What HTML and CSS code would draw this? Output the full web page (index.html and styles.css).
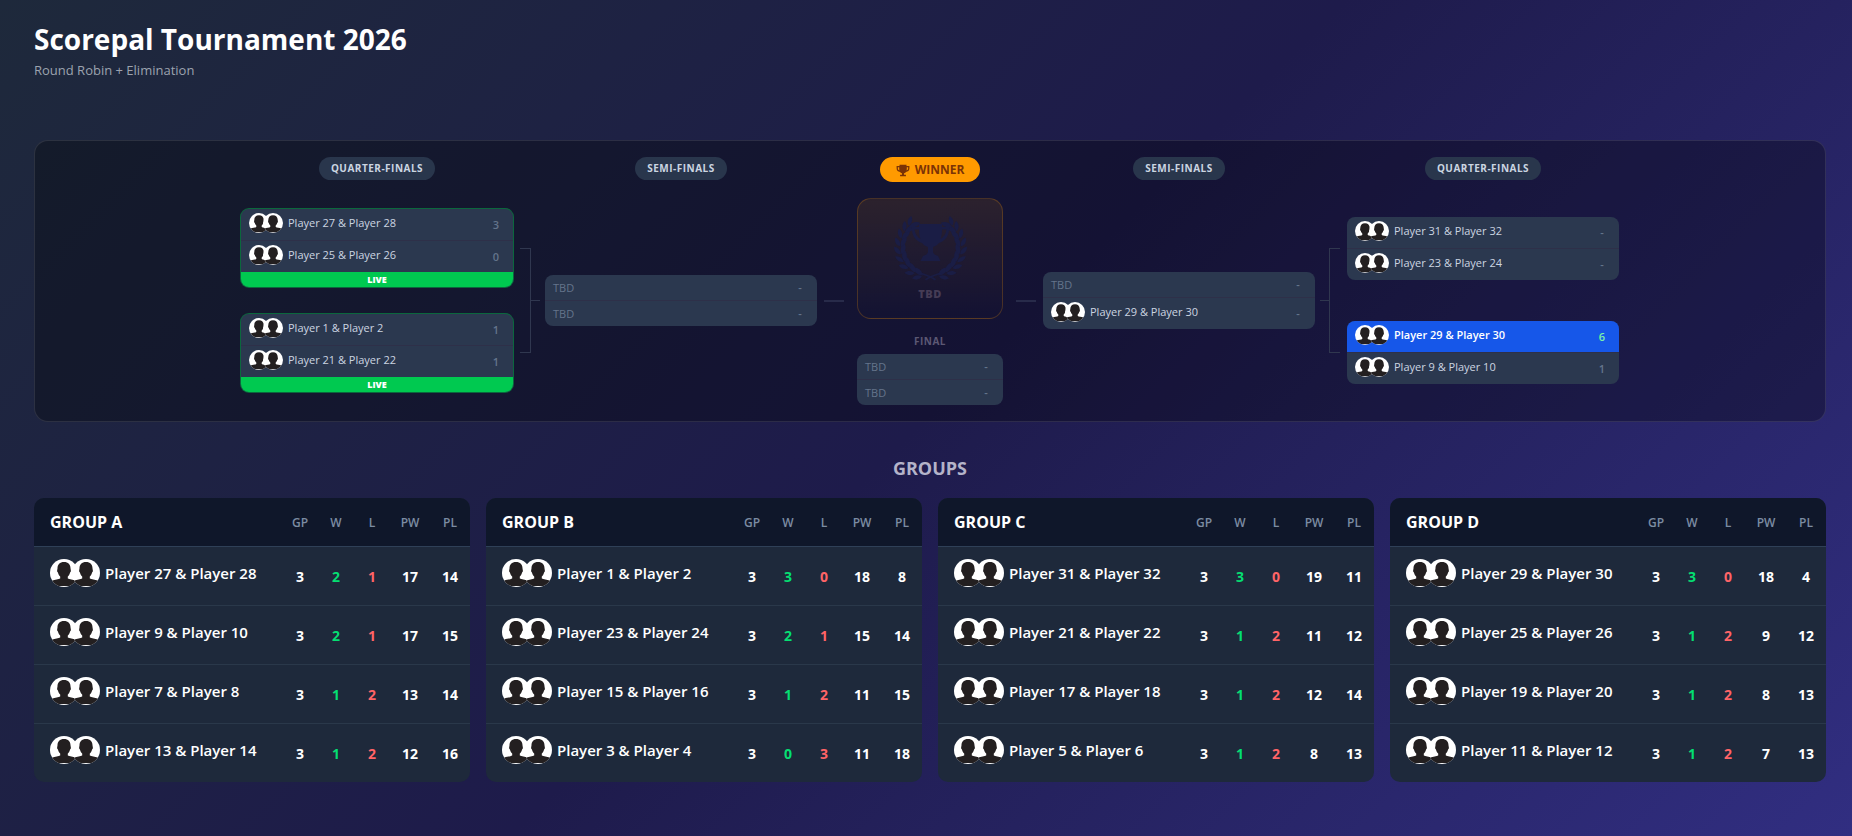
FILE: index.html
```
<!DOCTYPE html>
<html lang="en">
<head>
	<meta charset="UTF-8">
	<meta name="viewport" content="width=device-width, initial-scale=1">
	<title>Scorepal Tournament 2026</title>
	<link rel="stylesheet" href="styles.css">
</head>
<body>
	<svg class="defs" aria-hidden="true">
		<symbol id="avatar" viewBox="0 0 28 28">
			<clipPath id="round"><circle cx="14" cy="14" r="14"/></clipPath>
			<g clip-path="url(#round)">
				<rect width="28" height="28" fill="#fff"/>
				<path fill="#231f20" d="M14 3c4.200 0 6.500 2.600 6.500 6.200l.4 2.600c0 1.300-.6 1.600-.9 1.800-.3 1.600-1 3-2.200 4v2c1.400 1 5.500 1 7.700 2L28 22.500V27H0v-4.500l2.500-.9c2.200-1 6.300-1 7.700-2v-2c-1.200-1-1.900-2.400-2.200-4-.3-.2-.9-.5-.9-1.800l.4-2.600C7.500 5.600 9.800 3 14 3z"/>
			</g>
		</symbol>
		<symbol id="trophy" viewBox="0 0 24 24">
			<path fill="currentColor" d="M6 3h12v2h5v4c0 4-2.500 6-6 6.300-.9 1.200-2 2-3.300 2.400V20H17v2.500H7V20h3.300v-2.300C9 17.300 7.900 16.500 7 15.300 3.500 15 1 13 1 9V5h5zM3.200 7.200V9c0 2 .9 3.200 2.600 3.700C5.400 11 5.500 9 5.500 7.200zm15.300 0c0 1.800.1 3.800-.3 5.500 1.700-.5 2.600-1.700 2.600-3.700V7.200z"/>
		</symbol>
		<g id="leaves">
			<path d="M39 61.500c-2.500-4.500-7-6-11-4.500 2 4.500 6.500 6 11 4.500z"/>
			<path d="M38.500 62.500c-4-.5-7.500 1.500-8.500 5.500 4.500.5 7.500-1.500 8.500-5.500z"/>
		</g>
		<g id="branch">
			<use href="#leaves" transform="rotate(20 36.500 32)"/>
			<use href="#leaves" transform="rotate(35 36.500 32)"/>
			<use href="#leaves" transform="rotate(50 36.500 32)"/>
			<use href="#leaves" transform="rotate(65 36.500 32)"/>
			<use href="#leaves" transform="rotate(80 36.500 32)"/>
			<use href="#leaves" transform="rotate(95 36.500 32)"/>
			<use href="#leaves" transform="rotate(110 36.500 32)"/>
			<use href="#leaves" transform="rotate(125 36.500 32)"/>
			<use href="#leaves" transform="rotate(138 36.500 32)"/>
			<path d="M24 57c6 1 11 3 18 7l-1 1.500c-6-4-12-6-17-7z"/>
		</g>
		<symbol id="laurel" viewBox="0 0 73 66">
			<g fill="currentColor">
				<use href="#branch"/>
				<use href="#branch" transform="translate(73 0) scale(-1 1)"/>
				<path d="M25 9h23v3h7c.5 7-2 13-10 16-1.500 2-3.500 3.300-6 4v5c.5 2 2 3 5 4l2.500 5h-20l2.500-5c3-1 4.500-2 5-4v-5c-2.500-.7-4.500-2-6-4-8-3-10.500-9-10-16h7zm-4.500 5.500c.5 4 2.500 7.500 6 9.500-1.200-3-1.500-6-1.500-9.500zm32 0H48c0 3.500-.3 6.500-1.500 9.500 3.500-2 5.500-5.500 6-9.500z"/>
			</g>
		</symbol>
	</svg>

	<header class="page-header">
		<h1>Scorepal Tournament 2026</h1>
		<p>Round Robin + Elimination</p>
	</header>

	<main>
		<section class="bracket">
			<div class="round">
				<h3 class="pill">Quarter-Finals</h3>
				<div class="slots">
					<div class="slot">
						<div class="match live">
							<div class="row"><span class="team"><svg><use href="#avatar"/></svg><svg><use href="#avatar"/></svg><span>Player 27 &amp; Player 28</span></span><b>3</b></div>
							<div class="row"><span class="team"><svg><use href="#avatar"/></svg><svg><use href="#avatar"/></svg><span>Player 25 &amp; Player 26</span></span><b>0</b></div>
							<div class="live-bar">LIVE</div>
						</div>
					</div>
					<div class="slot">
						<div class="match live">
							<div class="row"><span class="team"><svg><use href="#avatar"/></svg><svg><use href="#avatar"/></svg><span>Player 1 &amp; Player 2</span></span><b>1</b></div>
							<div class="row"><span class="team"><svg><use href="#avatar"/></svg><svg><use href="#avatar"/></svg><span>Player 21 &amp; Player 22</span></span><b>1</b></div>
							<div class="live-bar">LIVE</div>
						</div>
					</div>
				</div>
			</div>

			<div class="join"><i class="fork"></i><i class="stub"></i></div>

			<div class="round">
				<h3 class="pill">Semi-Finals</h3>
				<div class="slots">
					<div class="slot">
						<div class="match">
							<div class="row"><span class="tbd">TBD</span><b>-</b></div>
							<div class="row"><span class="tbd">TBD</span><b>-</b></div>
						</div>
					</div>
				</div>
			</div>

			<div class="join wide"><i class="line"></i></div>

			<div class="final">
				<h3 class="pill winner-pill"><svg><use href="#trophy"/></svg>Winner</h3>
				<div class="champion">
					<svg><use href="#laurel"/></svg>
					<span>TBD</span>
				</div>
				<h4>Final</h4>
				<div class="match">
					<div class="row"><span class="tbd">TBD</span><b>-</b></div>
					<div class="row"><span class="tbd">TBD</span><b>-</b></div>
				</div>
			</div>

			<div class="join wide right"><i class="line"></i></div>

			<div class="round">
				<h3 class="pill">Semi-Finals</h3>
				<div class="slots">
					<div class="slot">
						<div class="match">
							<div class="row"><span class="tbd">TBD</span><b>-</b></div>
							<div class="row"><span class="team"><svg><use href="#avatar"/></svg><svg><use href="#avatar"/></svg><span>Player 29 &amp; Player 30</span></span><b>-</b></div>
						</div>
					</div>
				</div>
			</div>

			<div class="join right"><i class="fork"></i><i class="stub"></i></div>

			<div class="round">
				<h3 class="pill">Quarter-Finals</h3>
				<div class="slots">
					<div class="slot">
						<div class="match">
							<div class="row"><span class="team"><svg><use href="#avatar"/></svg><svg><use href="#avatar"/></svg><span>Player 31 &amp; Player 32</span></span><b>-</b></div>
							<div class="row"><span class="team"><svg><use href="#avatar"/></svg><svg><use href="#avatar"/></svg><span>Player 23 &amp; Player 24</span></span><b>-</b></div>
						</div>
					</div>
					<div class="slot">
						<div class="match">
							<div class="row won"><span class="team"><svg><use href="#avatar"/></svg><svg><use href="#avatar"/></svg><span>Player 29 &amp; Player 30</span></span><b>6</b></div>
							<div class="row"><span class="team"><svg><use href="#avatar"/></svg><svg><use href="#avatar"/></svg><span>Player 9 &amp; Player 10</span></span><b>1</b></div>
						</div>
					</div>
				</div>
			</div>
		</section>

		<h2>Groups</h2>
		<section class="groups">
			<table>
				<thead>
					<tr><th>Group A</th><th>GP</th><th>W</th><th>L</th><th>PW</th><th>PL</th></tr>
				</thead>
				<tbody>
					<tr><td><span class="team"><svg><use href="#avatar"/></svg><svg><use href="#avatar"/></svg><span>Player 27 &amp; Player 28</span></span></td><td>3</td><td>2</td><td>1</td><td>17</td><td>14</td></tr>
					<tr><td><span class="team"><svg><use href="#avatar"/></svg><svg><use href="#avatar"/></svg><span>Player 9 &amp; Player 10</span></span></td><td>3</td><td>2</td><td>1</td><td>17</td><td>15</td></tr>
					<tr><td><span class="team"><svg><use href="#avatar"/></svg><svg><use href="#avatar"/></svg><span>Player 7 &amp; Player 8</span></span></td><td>3</td><td>1</td><td>2</td><td>13</td><td>14</td></tr>
					<tr><td><span class="team"><svg><use href="#avatar"/></svg><svg><use href="#avatar"/></svg><span>Player 13 &amp; Player 14</span></span></td><td>3</td><td>1</td><td>2</td><td>12</td><td>16</td></tr>
				</tbody>
			</table>
			<table>
				<thead>
					<tr><th>Group B</th><th>GP</th><th>W</th><th>L</th><th>PW</th><th>PL</th></tr>
				</thead>
				<tbody>
					<tr><td><span class="team"><svg><use href="#avatar"/></svg><svg><use href="#avatar"/></svg><span>Player 1 &amp; Player 2</span></span></td><td>3</td><td>3</td><td>0</td><td>18</td><td>8</td></tr>
					<tr><td><span class="team"><svg><use href="#avatar"/></svg><svg><use href="#avatar"/></svg><span>Player 23 &amp; Player 24</span></span></td><td>3</td><td>2</td><td>1</td><td>15</td><td>14</td></tr>
					<tr><td><span class="team"><svg><use href="#avatar"/></svg><svg><use href="#avatar"/></svg><span>Player 15 &amp; Player 16</span></span></td><td>3</td><td>1</td><td>2</td><td>11</td><td>15</td></tr>
					<tr><td><span class="team"><svg><use href="#avatar"/></svg><svg><use href="#avatar"/></svg><span>Player 3 &amp; Player 4</span></span></td><td>3</td><td>0</td><td>3</td><td>11</td><td>18</td></tr>
				</tbody>
			</table>
			<table>
				<thead>
					<tr><th>Group C</th><th>GP</th><th>W</th><th>L</th><th>PW</th><th>PL</th></tr>
				</thead>
				<tbody>
					<tr><td><span class="team"><svg><use href="#avatar"/></svg><svg><use href="#avatar"/></svg><span>Player 31 &amp; Player 32</span></span></td><td>3</td><td>3</td><td>0</td><td>19</td><td>11</td></tr>
					<tr><td><span class="team"><svg><use href="#avatar"/></svg><svg><use href="#avatar"/></svg><span>Player 21 &amp; Player 22</span></span></td><td>3</td><td>1</td><td>2</td><td>11</td><td>12</td></tr>
					<tr><td><span class="team"><svg><use href="#avatar"/></svg><svg><use href="#avatar"/></svg><span>Player 17 &amp; Player 18</span></span></td><td>3</td><td>1</td><td>2</td><td>12</td><td>14</td></tr>
					<tr><td><span class="team"><svg><use href="#avatar"/></svg><svg><use href="#avatar"/></svg><span>Player 5 &amp; Player 6</span></span></td><td>3</td><td>1</td><td>2</td><td>8</td><td>13</td></tr>
				</tbody>
			</table>
			<table>
				<thead>
					<tr><th>Group D</th><th>GP</th><th>W</th><th>L</th><th>PW</th><th>PL</th></tr>
				</thead>
				<tbody>
					<tr><td><span class="team"><svg><use href="#avatar"/></svg><svg><use href="#avatar"/></svg><span>Player 29 &amp; Player 30</span></span></td><td>3</td><td>3</td><td>0</td><td>18</td><td>4</td></tr>
					<tr><td><span class="team"><svg><use href="#avatar"/></svg><svg><use href="#avatar"/></svg><span>Player 25 &amp; Player 26</span></span></td><td>3</td><td>1</td><td>2</td><td>9</td><td>12</td></tr>
					<tr><td><span class="team"><svg><use href="#avatar"/></svg><svg><use href="#avatar"/></svg><span>Player 19 &amp; Player 20</span></span></td><td>3</td><td>1</td><td>2</td><td>8</td><td>13</td></tr>
					<tr><td><span class="team"><svg><use href="#avatar"/></svg><svg><use href="#avatar"/></svg><span>Player 11 &amp; Player 12</span></span></td><td>3</td><td>1</td><td>2</td><td>7</td><td>13</td></tr>
				</tbody>
			</table>
		</section>
	</main>
</body>
</html>
```
FILE: styles.css
```
* {
	box-sizing: border-box;
}
body {
	margin: 0;
	min-height: 100vh;
	padding: 21px 26px 24px 34px;
	font-family: "Segoe UI", "Open Sans", sans-serif;
	color: white;
	background: linear-gradient(135deg, #1e293b, #1e1b4b 50%, #312e81);
}
h1, h2, h3, h4, p {
	margin: 0;
}
.defs {
	position: absolute;
	width: 0;
	height: 0;
}

/* header */
.page-header {
	margin-bottom: 60px;
}
h1 {
	font-size: 28px;
	line-height: 36px;
}
.page-header p {
	margin-top: 3px;
	font-size: 13px;
	line-height: 20px;
	color: #9ca3af;
}

/* bracket */
.bracket {
	display: flex;
	justify-content: center;
	padding: 16px;
	background: rgba(0, 0, 0, 0.3);
	border: 1px solid rgba(255, 255, 255, 0.1);
	border-radius: 14px;
}
.round {
	flex: 0 1 272px;
	display: flex;
	flex-direction: column;
	align-items: center;
}
.pill {
	margin-bottom: 16px;
	padding: 4px 12px;
	border-radius: 14px;
	background: #29364c;
	color: #cbd5e1;
	font-size: 10px;
	line-height: 15px;
	letter-spacing: 0.05em;
	text-transform: uppercase;
}
.slots {
	flex: 1;
	align-self: stretch;
	display: flex;
	flex-direction: column;
}
.slot {
	flex: 1;
	display: flex;
	flex-direction: column;
	justify-content: center;
}
.match {
	overflow: hidden;
	border-radius: 8px;
	background: #2b384f;
}
.match.live {
	box-shadow: 0 0 0 1px rgba(0, 201, 80, 0.45);
}
.row {
	display: flex;
	align-items: center;
	justify-content: space-between;
	padding: 4px 8px;
	font-size: 11px;
	line-height: 17px;
	color: #cbd5e1;
}
.row + .row {
	border-top: 1px solid #2e3049;
}
.row b {
	width: 18px;
	text-align: center;
	font-weight: 600;
	color: #64748b;
}
.row .tbd {
	color: #64748b;
}
.row.won {
	background: #1657e9;
	color: white;
}
.row.won b {
	color: #7bf1a8;
}
.row.won .team {
	font-weight: 600;
}
.live-bar {
	background: #00c950;
	color: white;
	font-size: 9px;
	font-weight: 800;
	line-height: 15px;
	text-align: center;
}

/* avatar pair + names */
.team {
	display: flex;
	padding-bottom: 3px;
	font-weight: 500;
	line-height: 20px;
	white-space: nowrap;
}
.team svg {
	width: 20px;
	height: 20px;
}
.team svg + svg {
	margin-left: -6px;
	margin-right: 5px;
}

/* connectors, top padding clears the round title */
.join {
	display: flex;
	align-items: center;
	padding: 39px 5px 0 7px;
}
.join.wide {
	padding-right: 13px;
}
.join.right {
	flex-direction: row-reverse;
	padding-left: 5px;
	padding-right: 7px;
}
.join.wide.right {
	padding-left: 13px;
}
.fork {
	width: 11px;
	height: 105px;
	border: 1px solid #30374f;
	border-left: 0;
}
.join.right .fork {
	border-left: 1px solid #30374f;
	border-right: 0;
}
.stub {
	width: 9px;
	height: 1px;
	background: #30374f;
}
.line {
	width: 20px;
	height: 2px;
	background: #282b4a;
}

/* final */
.final {
	flex: 0 0 146px;
	display: flex;
	flex-direction: column;
	align-items: center;
}
.winner-pill {
	display: flex;
	align-items: center;
	gap: 5px;
	padding: 4px 16px;
	background: #ff9a00;
	color: #7b3306;
	font-size: 12px;
	line-height: 17px;
	letter-spacing: normal;
}
.winner-pill svg {
	width: 14px;
	height: 14px;
}
.champion {
	width: 100%;
	height: 121px;
	padding-top: 16px;
	display: flex;
	flex-direction: column;
	align-items: center;
	gap: 5px;
	border: 1px solid rgba(254, 154, 0, 0.22);
	border-radius: 14px;
	background: linear-gradient(rgba(254, 154, 0, 0.1), transparent);
}
.champion svg {
	width: 73px;
	height: 66px;
	overflow: visible;
	color: #1a1d45;
}
.champion span {
	font-size: 11px;
	font-weight: 800;
	line-height: 16px;
	letter-spacing: 0.05em;
	color: #453c55;
}
.final h4 {
	margin: 14px 0 5px;
	font-size: 10px;
	line-height: 16px;
	letter-spacing: 0.05em;
	text-transform: uppercase;
	color: #5c5873;
}
.final .match {
	width: 100%;
}

/* groups */
h2 {
	margin: 32px 0 16px;
	font-size: 18px;
	line-height: 28px;
	text-align: center;
	text-transform: uppercase;
	color: #b4b3c9;
}
.groups {
	display: grid;
	grid-template-columns: repeat(4, 1fr);
	gap: 16px;
}
table {
	width: 100%;
	table-layout: fixed;
	border-spacing: 0;
	border-radius: 10px;
	overflow: hidden;
	background: #1e293b;
	font-size: 14px;
	font-weight: 700;
}
th, td {
	width: 36px;
	padding: 0;
	text-align: center;
}
th:nth-child(n+5) {
	width: 40px;
}
th {
	height: 49px;
	background: #0f172a;
	border-bottom: 1px solid #2f4057;
	font-size: 12px;
	font-weight: 600;
	color: #7c8ca2;
}
th:first-child {
	width: auto;
	padding-left: 16px;
	text-align: left;
	font-size: 16px;
	font-weight: 700;
	text-transform: uppercase;
	color: white;
}
td {
	padding: 12px 0;
}
td:first-child {
	padding-left: 16px;
}
tr + tr td {
	border-top: 1px solid #2a384a;
}
td:nth-child(3) {
	color: #05df72;
}
td:nth-child(4) {
	color: #ff6467;
}
td .team {
	padding-bottom: 6px;
	font-size: 15px;
	font-weight: 600;
	line-height: 28px;
}
td .team svg {
	width: 28px;
	height: 28px;
}
```
